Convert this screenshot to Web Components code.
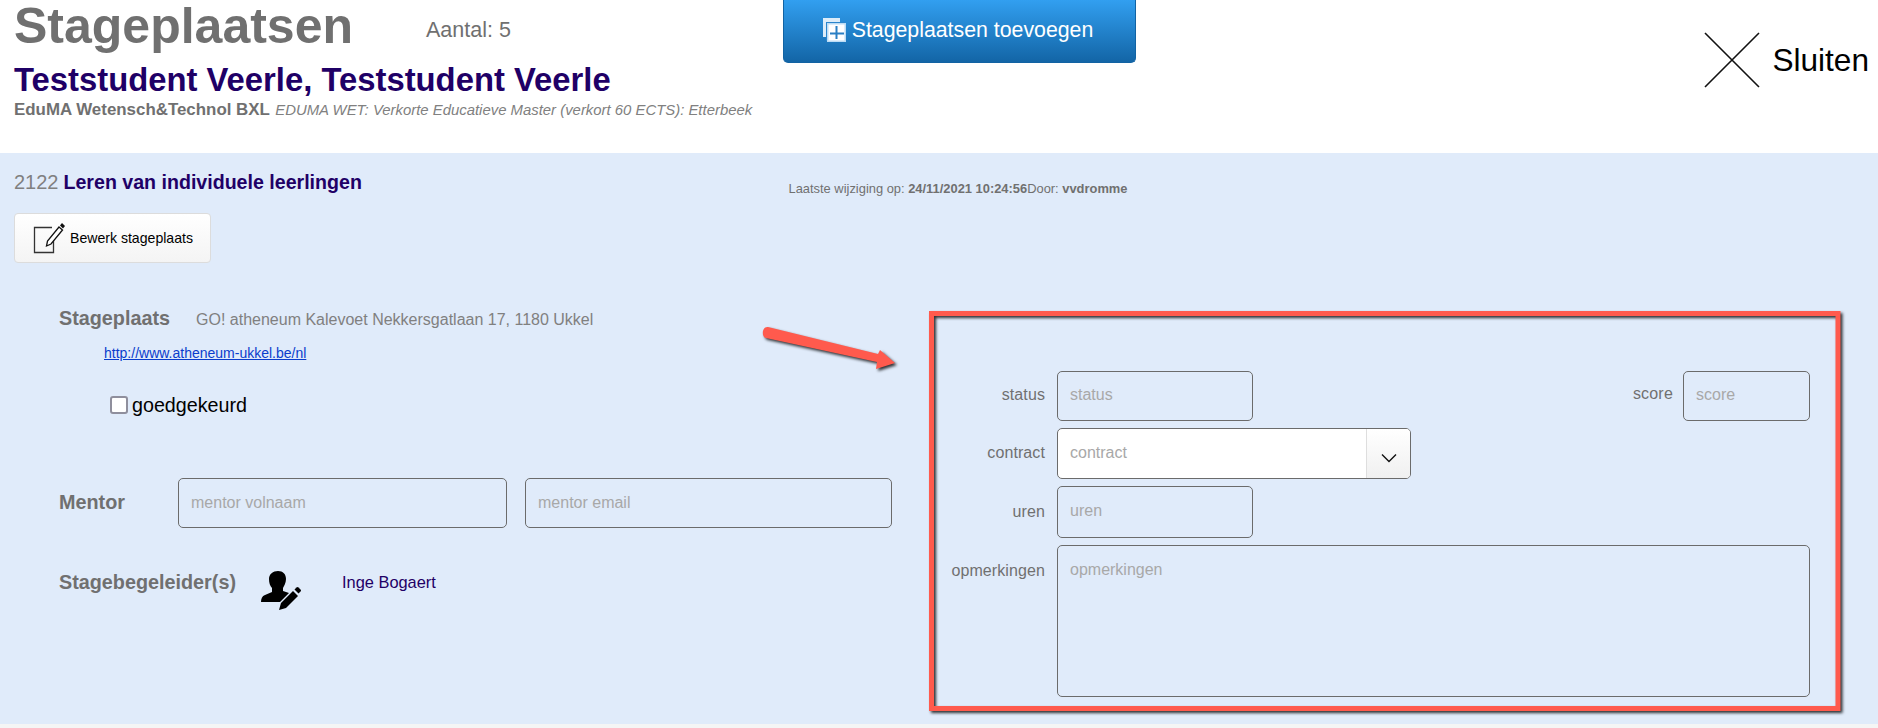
<!DOCTYPE html>
<html lang="nl">
<head>
<meta charset="utf-8">
<title>Stageplaatsen</title>
<style>
html, body { margin: 0; padding: 0; background: #f5f5f5; }
body { font-family: "Liberation Sans", Arial, sans-serif; color: #707070; width: 1878px; height: 728px; overflow: hidden; }
</style>
</head>
<body>
<page-header></page-header>
<placement-panel></placement-panel>

<script>
class PageHeader extends HTMLElement {
  constructor() {
    super();
    const shadow = this.attachShadow({ mode: "open" });
    shadow.innerHTML = `<style>
      :host { display: flex; height: 153px; background: #fff; box-sizing: border-box; padding-left: 14px; }
      .left { width: 769px; flex: none; }
      .top { display: flex; align-items: flex-start; height: 60px; }
      h1 { margin: 0; font-size: 50px; line-height: 52px; font-weight: bold; color: #707070; width: 412px; }
      .count { font-size: 21.5px; line-height: 24px; color: #707070; margin-top: 18px; }
      .name { font-size: 32.8px; line-height: 38px; font-weight: bold; color: #1f0066; margin-top: 1px; }
      .sub { font-size: 16.9px; line-height: 20px; font-weight: bold; color: #707070; white-space: nowrap; margin-top: 1px; }
      .sub em { font-size: 14.9px; font-weight: normal; color: #808080; margin-left: 1px; }
      button {
        flex: none; width: 353px; height: 63px; padding: 0 3px 2px 0; border: 1px solid #1263a3; border-top: 0; border-radius: 0 0 5px 5px;
        background: linear-gradient(#329ff0, #1365a6); color: #fff; font: 21.3px "Liberation Sans", Arial, sans-serif;
        display: flex; align-items: center; justify-content: center; gap: 6px;
      }
      .close { margin-left: auto; margin-right: 9px; height: 120px; display: flex; align-items: center; gap: 12px; color: #000; font-size: 31.6px; align-self: flex-start; }
    </style>
    <div class="left">
      <div class="top"><h1>Stageplaatsen</h1><span class="count">Aantal: 5</span></div>
      <div class="name">Teststudent Veerle, Teststudent Veerle</div>
      <div class="sub">EduMA Wetensch&amp;Technol BXL <em>EDUMA WET: Verkorte Educatieve Master (verkort 60 ECTS): Etterbeek</em></div>
    </div>
    <button>
      <svg width="23" height="24" viewBox="0 0 23 24"><path fill="#dcecf9" d="M0 0h17v19H0z"/><path fill="#2b85cc" d="M3 4h19v19H3z"/><path fill="#bcdcf5" d="M4 5h19v19H4z"/><path fill="#fff" d="M5.500 6.500h16v16h-16z"/><path fill="#2a7fc4" d="M12.500 8h2v6.500H21v2h-6.500V21h-2v-4.500H7v-2h5.500z"/></svg>
      <span>Stageplaatsen toevoegen</span>
    </button>
    <div class="close">
      <svg width="56" height="57" viewBox="0 0 56 57"><path stroke="#111" stroke-width="1.6" fill="none" d="M1 1l54 54M55 1L1 55"/></svg>
      <span>Sluiten</span>
    </div>`;
  }
}

class FormInput extends HTMLElement {
  constructor() {
    super();
    const shadow = this.attachShadow({ mode: "open" });
    shadow.innerHTML = `<style>
      :host { display: block; box-sizing: border-box; height: 50px; border: 1px solid #6b6b6b; border-radius: 5px; padding: var(--text-top, 13px) 12px 0;
        font-size: 16px; line-height: 20px; color: #a8a8a8; }
      :host([select]) { background: #fff; height: 51px; padding: 0 0 0 12px; display: flex; overflow: hidden; }
      :host([tall]) { height: 152px; }
      :host([select]) .text { flex: 1; padding-top: var(--text-top, 13px); }
      .caret { width: 44px; flex: none; border-left: 1px solid #dedede; background: linear-gradient(#fff, #f0f0f0); display: flex; align-items: center; justify-content: center; padding-top: 9px; box-sizing: border-box; }
    </style><span class="text"><slot></slot></span><span id="holder" style="display:contents"></span>`;
  }
  connectedCallback() {
    if (this.hasAttribute("select")) {
      this.shadowRoot.getElementById("holder").innerHTML =
        `<span class="caret"><svg width="16" height="10" viewBox="0 0 16 10"><path d="M1 1.500l7 7 7-7" fill="none" stroke="#111" stroke-width="1.400"/></svg></span>`;
    }
  }
}

class FormRow extends HTMLElement {
  constructor() {
    super();
    const shadow = this.attachShadow({ mode: "open" });
    shadow.innerHTML = `<style>
      :host { display: grid; grid-template-columns: 95px 1fr; column-gap: 12px; align-items: start; font-size: 16px; color: #707070; }
      label { text-align: right; line-height: 20px; padding-top: var(--label-top, 14px); white-space: nowrap; letter-spacing: .1px; }
    </style><label></label><slot></slot>`;
  }
  connectedCallback() {
    this.shadowRoot.querySelector("label").textContent = this.getAttribute("label");
  }
}

class DetailsBox extends HTMLElement {
  constructor() {
    super();
    const shadow = this.attachShadow({ mode: "open" });
    shadow.innerHTML = `<style>
      :host { display: flex; flex-direction: column; gap: 7px; width: 860px; flex: none; margin: 108px 0 0 11px; }
      .first { display: flex; }
      .first form-row { flex: none; width: 303px; }
      .score { margin-left: auto; display: flex; align-items: flex-start; gap: 10px; font-size: 16px; }
      .score span { padding-top: 13px; line-height: 20px; color: #707070; letter-spacing: .2px; }
      .score form-input { width: 127px; }
      .contract { width: 354px; }
      .short { width: 196px; }
    </style>
    <div class="first">
      <form-row label="status"><form-input class="short">status</form-input></form-row>
      <div class="score"><span>score</span><form-input>score</form-input></div>
    </div>
    <form-row label="contract" style="--label-top:15px;--text-top:14px"><form-input class="contract" select>contract</form-input></form-row>
    <form-row label="uren" style="--label-top:16px;--text-top:14px"><form-input class="short" style="height:52px">uren</form-input></form-row>
    <form-row label="opmerkingen" style="--label-top:16px;--text-top:14px"><form-input tall>opmerkingen</form-input></form-row>`;
  }
}

class PlacementPanel extends HTMLElement {
  constructor() {
    super();
    const shadow = this.attachShadow({ mode: "open" });
    shadow.innerHTML = `<style>
      :host { display: block; position: relative; height: 571px; box-sizing: border-box; background: #e0ebfa; padding: 17px 0 0 14px; color: #707070; }
      .title { display: flex; height: 24px; align-items: center; }
      .title .num { font-size: 20px; color: #808080; }
      .title b { font-size: 19.6px; color: #1f0066; margin-left: 5px; width: 725px; flex: none; }
      .changed { font-size: 12.9px; color: #707070; margin-top: 12px; white-space: nowrap; }
      .edit { display: flex; align-items: center; gap: 5px; box-sizing: border-box; width: 197px; height: 50px; margin-top: 19px; padding: 0 0 0 18px;
        border: 1px solid #dcdcdc; border-radius: 4px; background: linear-gradient(#fff, #f4f4f4); font: 14.1px "Liberation Sans", Arial, sans-serif; color: #000; }
      .columns { display: flex; align-items: flex-start; }
      .body { margin-left: 45px; margin-top: 44px; width: 880px; flex: none; }
      .place { display: flex; align-items: baseline; }
      .place b, .mentor b, .coach b { font-size: 19.8px; color: #707070; }
      .place span { font-size: 16px; color: #808080; margin-left: 26px; }
      a { display: block; font-size: 14px; color: #0a3dcc; margin: 14px 0 0 45px; line-height: 18px; }
      .approved { display: flex; align-items: center; gap: 4px; margin: 31px 0 0 51px; font-size: 19.7px; color: #000; height: 24px; }
      .box { width: 18px; height: 18px; box-sizing: border-box; background: #fff; border: 2px solid #8f8f9d; border-radius: 3px; }
      .mentor { display: grid; grid-template-columns: 119px 329px 385px; align-items: center; margin-top: 61px; }
      .mentor b { padding-bottom: 2px; }
      .mentor form-input { --text-top: 14px; }
      .mentor form-input + form-input { margin-left: 18px; }
      .coach { display: flex; align-items: flex-start; margin-top: 42px; }
      .coach b { width: 202px; flex: none; line-height: 23px; padding-top: 1px; }
      .coach svg { flex: none; }
      .coach span { font-size: 16.4px; line-height: 22px; color: #1f0066; margin-left: 41px; padding-top: 1px; }
      .annotation { position: absolute; left: 0; top: 0; pointer-events: none; filter: drop-shadow(2px 2px 1.5px rgba(0,0,0,.8)); }
    </style>
    <div class="title"><span class="num">2122</span><b>Leren van individuele leerlingen</b>
      <span class="changed">Laatste wijziging op: <strong>24/11/2021 10:24:56</strong>Door: <strong>vvdromme</strong></span></div>
    <button class="edit">
      <svg width="32" height="32" viewBox="0 0 32 32"><path fill="none" stroke="#333" stroke-width="1.300" d="M19 5.500H1.500v25h19V14"/><path fill="#fff" stroke="#111" stroke-width="1.300" d="M26 5l3.500 3L18 22l-4.500 2 1-5z"/><path fill="#111" d="M27 3.500l2-2.500 3 3-2 2.500z"/></svg>
      <span>Bewerk stageplaats</span>
    </button>
    <div class="columns">
      <div class="body">
        <div class="place"><b>Stageplaats</b><span>GO! atheneum Kalevoet Nekkersgatlaan 17, 1180 Ukkel</span></div>
        <a href="#">http://www.atheneum-ukkel.be/nl</a>
        <div class="approved"><span class="box"></span><span>goedgekeurd</span></div>
        <div class="mentor"><b>Mentor</b><form-input>mentor volnaam</form-input><form-input>mentor email</form-input></div>
        <div class="coach"><b>Stagebegeleider(s)</b>
          <svg width="40" height="41" viewBox="0 0 40 41"><path d="M17 1c5 0 8 3 8 8 0 4-2 7-3 9v3l6 2-9 9H0c0-3 1-6 4-7l7-3v-4c-2-2-3-5-3-9 0-5 4-8 9-8z"/><path d="M18 40l2-7 12-12 5 5-12 12z"/><path d="M33.500 19.500l2-2q1-1 2 0l2 2q1 1 0 2l-2 2z"/></svg>
          <span>Inge Bogaert</span></div>
      </div>
      <details-box></details-box>
    </div>
    <svg class="annotation" width="1878" height="571" style="overflow:visible">
      <path fill="none" stroke="#ff5a4d" stroke-width="5" d="M931.500 160.500h906.500v395h-906.500z" />
      <path fill="#ff5a4d" d="M768 174L878 201L880 197L895 210L876 216L877 209L766 185C761 184 762 173 768 174z"/>
    </svg>`;
  }
}

customElements.define("page-header", PageHeader);
customElements.define("form-input", FormInput);
customElements.define("form-row", FormRow);
customElements.define("details-box", DetailsBox);
customElements.define("placement-panel", PlacementPanel);
</script>
</body>
</html>
